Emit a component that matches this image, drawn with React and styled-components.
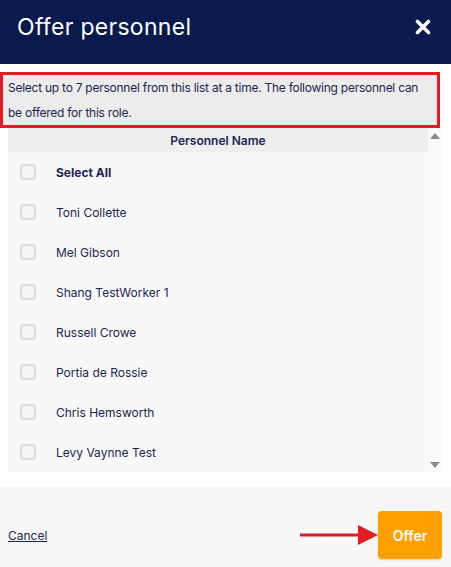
import React from "react";
import styled, { createGlobalStyle } from "styled-components";

const Global = createGlobalStyle`
  html, body { margin: 0; padding: 0; background: #ffffff; }
  body { font-family: Inter, "Noto Sans", Arial, sans-serif; color: #1b2552; }
  * { box-sizing: border-box; }
`;

const Modal = styled.div`
  width: 451px;
  height: 567px;
  display: flex;
  flex-direction: column;
  background: #ffffff;
  overflow: hidden;
`;

const Header = styled.div`
  height: 64px;
  flex: none;
  background: #0b1a4c;
  display: flex;
  align-items: center;
  justify-content: space-between;
  padding: 0 20px 0 17px;
`;

const Title = styled.h1`
  margin: 0;
  font-size: 23px;
  font-weight: 400;
  color: #ffffff;
  letter-spacing: 0.3px;
  margin-top: -10px;
`;

const Close = styled.button`
  border: 0;
  background: transparent;
  padding: 0;
  width: 16px;
  height: 16px;
  display: flex;
  margin-top: -10px;
  cursor: pointer;
`;

const Notice = styled.div`
  margin-top: 8px;
  width: 440px;
  border: 3px solid #e31c23;
  background: #ececec;
  padding: 0 2px 0 5px;
  font-size: 12px;
  letter-spacing: -0.25px;
  line-height: 25px;
  color: #1b2552;
`;

const Table = styled.div`
  margin-left: 8px;
  width: 434px;
  display: flex;
`;

const Grid = styled.div`
  flex: 1;
  display: flex;
  flex-direction: column;
`;

const HeadRow = styled.div`
  height: 24px;
  background: #eeeeee;
  display: flex;
  align-items: center;
  justify-content: center;
  font-size: 12px;
  font-weight: 600;
  color: #1b2552;
`;

const Row = styled.label`
  height: 40px;
  background: #f8f8f8;
  display: flex;
  align-items: center;
  padding-left: 12px;
  gap: 20px;
  font-size: 12px;
  font-weight: ${(p) => (p.$bold ? 700 : 400)};
  color: #1b2552;
`;

const Box = styled.span`
  width: 16px;
  height: 16px;
  border: 2px solid #dddddd;
  border-radius: 3px;
  background: #f5f5f5;
  flex: none;
`;

const Scrollbar = styled.div`
  width: 14px;
  background: #f9f9f9;
  display: flex;
  flex-direction: column;
  justify-content: space-between;
  align-items: center;
  padding: 5px 0 4px;
`;

const Arrow = styled.span`
  width: 0;
  height: 0;
  border-left: 5px solid transparent;
  border-right: 5px solid transparent;
  ${(p) =>
    p.$down
      ? "border-top: 6px solid #8a8a8a;"
      : "border-bottom: 6px solid #8a8a8a;"}
`;

const Footer = styled.div`
  margin-top: 15px;
  flex: 1;
  background: #f7f7f7;
  display: flex;
  align-items: flex-start;
  justify-content: space-between;
  padding: 24px 9px 0 8px;
`;

const Cancel = styled.a`
  font-size: 12px;
  color: #1b2552;
  text-decoration: underline;
  margin-top: 17px;
  cursor: pointer;
`;

const Right = styled.div`
  display: flex;
  align-items: center;
`;

const OfferButton = styled.button`
  width: 64px;
  height: 48px;
  border: 0;
  border-radius: 4px;
  background: #ffa000;
  color: #ffffff;
  font-family: inherit;
  font-size: 14px;
  font-weight: 600;
  box-shadow: 0 1px 2px rgba(0, 0, 0, 0.15);
`;

const people = [
  "Toni Collette",
  "Mel Gibson",
  "Shang TestWorker 1",
  "Russell Crowe",
  "Portia de Rossie",
  "Chris Hemsworth",
  "Levy Vaynne Test",
];

export default function App() {
  return (
    <>
      <Global />
      <Modal>
        <Header>
          <Title>Offer personnel</Title>
          <Close aria-label="Close">
            <svg width="16" height="16" viewBox="0 0 16 16">
              <path d="M2.5 2.5 L13.5 13.5 M13.5 2.5 L2.5 13.5" stroke="#fff" strokeWidth="3.6" strokeLinecap="round" />
            </svg>
          </Close>
        </Header>
        <Notice>
          Select up to 7 personnel from this list at a time. The following personnel can be offered for this role.
        </Notice>
        <Table>
          <Grid>
            <HeadRow>Personnel Name</HeadRow>
            <Row $bold>
              <Box />
              Select All
            </Row>
            {people.map((n) => (
              <Row key={n}>
                <Box />
                {n}
              </Row>
            ))}
          </Grid>
          <Scrollbar>
            <Arrow />
            <Arrow $down />
          </Scrollbar>
        </Table>
        <Footer>
          <Cancel>Cancel</Cancel>
          <Right>
            <svg width="78" height="22" viewBox="0 0 78 22">
              <rect x="0" y="9.5" width="60" height="3" fill="#e31c23" />
              <polygon points="58,1 78,11 58,21" fill="#e31c23" />
            </svg>
            <OfferButton>Offer</OfferButton>
          </Right>
        </Footer>
      </Modal>
    </>
  );
}
